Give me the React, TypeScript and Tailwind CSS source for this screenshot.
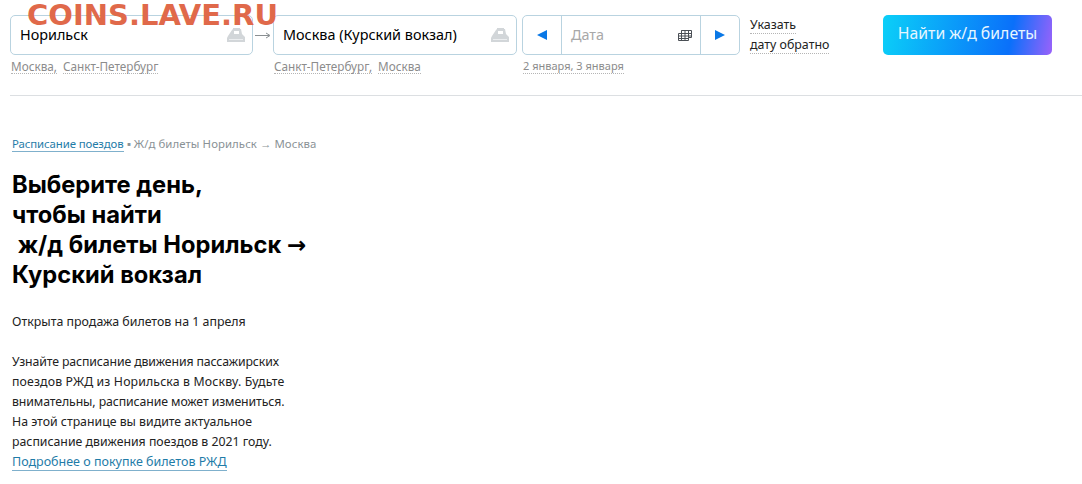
import React from 'react';

const TrainIcon = () => (
  <svg width="18" height="15" viewBox="0 0 18 15" className="mb-[2px] shrink-0">
    <path d="M0 15v-4l1-2 4-6 1-1v-1h7v1h1l1 5 3 3v5z" fill="#d2d6d9" />
    <rect x="7" y="4" width="5" height="3" fill="#fff" />
    <rect x="2" y="12" width="14" height="1" fill="#eceef0" />
  </svg>
);

const GridIcon = () => (
  <svg width="14" height="11" viewBox="0 0 14 11" fill="none" stroke="#4a4f55" strokeWidth="1">
    <path d="M3.5 .5h10v7h-3v3h-10v-7h3z M3.5 .5v10 M7 .5v10 M10.5 .5v7 M.5 6h13 M3.5 3.5h10 M.5 8.5h10" />
  </svg>
);

const Hint = ({ children }: { children: React.ReactNode }) => (
  <span className="border-b border-dotted border-[#b5b5b5] leading-[14px]">{children}</span>
);

const CityField = ({ value, hints }: { value: string; hints: string[] }) => (
  <div className="flex flex-col">
    <div className="flex h-10 items-center justify-between rounded-[5px] border border-[#b9d3e0] pl-[9px] pr-[7px] text-[14.4px] text-black">
      <span>{value}</span>
      <TrainIcon />
    </div>
    <div className="mt-[4px] flex gap-[6px] pl-[1px] text-[11.75px] text-[#8c8c8c]">
      {hints.map((h) => (
        <Hint key={h}>{h}</Hint>
      ))}
    </div>
  </div>
);

export default function App() {
  return (
    <div className="relative h-[484px] w-[1082px] overflow-hidden bg-white font-['Noto_Sans',sans-serif]">
      <div className="absolute left-[27px] top-0 font-['DejaVu_Sans',sans-serif] text-[29px] font-bold leading-[30px] text-[#e0694a]">
        COINS.LAVE.RU
      </div>

      <div className="flex items-start pl-[10px] pt-[15px]">
        <div className="w-[243px]">
          <CityField value="Норильск" hints={['Москва,', 'Санкт-Петербург']} />
        </div>
        <div className="flex h-10 w-5 items-center justify-center">
          <svg width="16" height="7" viewBox="0 0 16 7" fill="none" stroke="#8a8f92">
            <path d="M0 3.5h14 M11 1l4 2.5L11 6" />
          </svg>
        </div>
        <div className="w-[244px]">
          <CityField value="Москва (Курский вокзал)" hints={['Санкт-Петербург,', 'Москва']} />
        </div>

        <div className="ml-[5px] flex w-[218px] flex-col">
          <div className="flex h-10 rounded-[5px] border border-[#b9d3e0]">
            <div className="flex w-[39px] items-center justify-center border-r border-[#b9d3e0]">
              <svg width="10" height="10" viewBox="0 0 10 10" fill="#0a78e6">
                <path d="M0 5L10 0v10z" />
              </svg>
            </div>
            <div className="flex flex-1 items-center justify-between pl-[9px] pr-2 text-[14.4px] text-[#a8a8a8]">
              <span>Дата</span>
              <GridIcon />
            </div>
            <div className="flex w-[39px] items-center justify-center border-l border-[#b9d3e0]">
              <svg width="10" height="10" viewBox="0 0 10 10" fill="#0a78e6">
                <path d="M10 5L0 0v10z" />
              </svg>
            </div>
          </div>
          <div className="mt-[4px] flex pl-[1px] text-[11px] text-[#8c8c8c]">
            <Hint>2 января, 3 января</Hint>
          </div>
        </div>

        <div className="ml-[10px] mt-[1px] flex w-[133px] flex-col items-start gap-[2px] text-[12.4px] leading-[17px] text-[#222]">
          <span className="border-b border-dotted border-[#b5b5b5]">Указать</span>
          <span className="border-b border-dotted border-[#b5b5b5]">дату обратно</span>
        </div>

        <button className="flex h-10 w-[169px] items-center justify-center rounded-[5px] bg-[linear-gradient(100deg,#0bd0f8_0%,#0a70fa_75%,#9a62fa_100%)] pb-[2px] text-[15.8px] text-[#e6f6ff]">
          Найти ж/д билеты
        </button>
      </div>

      <div className="ml-[10px] mt-[21px] h-px bg-[#dcdfe2]" />

      <div className="pl-3 pt-[40px]">
        <div className="text-[11.4px] leading-4 text-[#8a9296]">
          <a className="border-b border-[#7fb0cc] tracking-[-0.1px] text-[#1f7ca8]">Расписание поездов</a>
          <span className="tracking-[0.07px]"> ▪ Ж/д билеты Норильск → Москва</span>
        </div>

        <h1 className="mt-[18px] w-[310px] whitespace-pre-wrap font-['Inter',sans-serif] text-[23.7px] font-bold leading-[30px] text-black">
          {'Выберите день,\nчтобы найти\n ж/д билеты Норильск '}
          <span className="font-['DejaVu_Sans',sans-serif] text-[23px] leading-none">→</span>
          {'\nКурский вокзал'}
        </h1>

        <p className="mt-[22px] text-[12.4px] leading-5 text-[#222]">Открыта продажа билетов на 1 апреля</p>

        <div className="mt-5 w-[300px] text-[12.3px] leading-5 text-[#222]">
          <p className="tracking-[-0.12px]">Узнайте расписание движения пассажирских</p>
          <p className="tracking-[0.14px]">поездов РЖД из Норильска в Москву. Будьте</p>
          <p className="tracking-[-0.1px]">внимательны, расписание может измениться.</p>
          <p>На этой странице вы видите актуальное</p>
          <p>расписание движения поездов в 2021 году.</p>
          <a className="border-b border-[#7fb0cc] text-[12.5px] text-[#1f7ca8]">Подробнее о покупке билетов РЖД</a>
        </div>
      </div>
    </div>
  );
}
